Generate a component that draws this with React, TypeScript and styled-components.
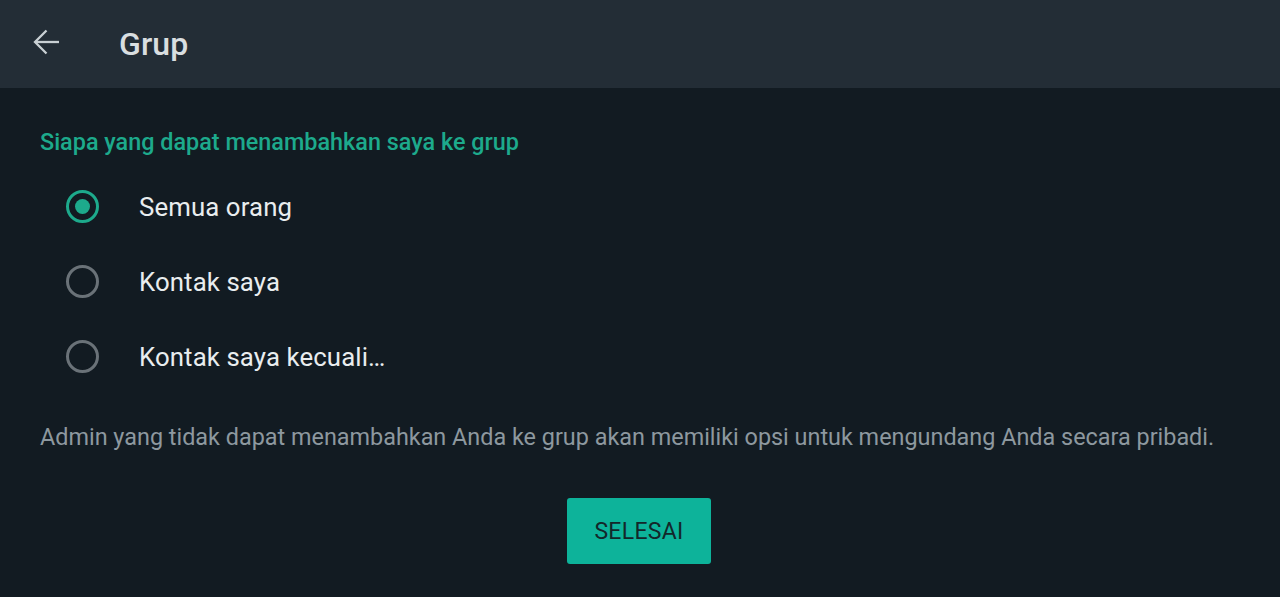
import React from "react";
import styled, { createGlobalStyle } from "styled-components";

const Global = createGlobalStyle`
  html, body { margin: 0; padding: 0; background: #121b22; }
  body { font-family: Roboto, "Noto Sans", sans-serif; overflow: hidden; }
`;

const Page = styled.div`
  width: 1280px;
  height: 597px;
  background: #121b22;
  display: flex;
  flex-direction: column;
`;

const Header = styled.header`
  height: 88px;
  background: #232d36;
  display: flex;
  align-items: center;
  flex-shrink: 0;
`;

const BackButton = styled.div`
  width: 119px;
  height: 88px;
  display: flex;
  align-items: center;
  padding-left: 33px;
  box-sizing: border-box;
  padding-bottom: 4px;
`;

const Title = styled.h1`
  margin: 0;
  font-size: 32px;
  font-weight: 500;
  color: #d9dee0;
  letter-spacing: 0.1px;
`;

const Content = styled.main`
  padding: 0 40px;
  display: flex;
  flex-direction: column;
`;

const SectionTitle = styled.h2`
  margin: 40px 0 0;
  font-size: 23.4px;
  line-height: 28px;
  font-weight: 500;
  color: #1daa8c;
`;

const Options = styled.div`
  margin-top: 34px;
  display: flex;
  flex-direction: column;
  gap: 42px;
`;

const Option = styled.label`
  display: flex;
  align-items: center;
  height: 33px;
  padding-left: 26px;
`;

const Radio = styled.span<{ $checked?: boolean }>`
  width: 33px;
  height: 33px;
  box-sizing: border-box;
  border-radius: 50%;
  border: 3px solid ${(p) => (p.$checked ? "#1daa8c" : "#6a7278")};
  display: flex;
  align-items: center;
  justify-content: center;
  flex-shrink: 0;
  &::after {
    content: "";
    display: ${(p) => (p.$checked ? "block" : "none")};
    width: 15px;
    height: 15px;
    border-radius: 50%;
    background: #1daa8c;
  }
`;

const OptionText = styled.span`
  margin-left: 40px;
  font-size: 25.8px;
  line-height: 33px;
  padding-top: 2px;
  color: #e9edef;
  letter-spacing: 0.1px;
`;

const Note = styled.p`
  margin: 50px 0 0;
  font-size: 23.4px;
  line-height: 28px;
  color: #8d989f;
  letter-spacing: 0;
  white-space: nowrap;
`;

const Actions = styled.div`
  display: flex;
  justify-content: center;
  margin-top: 47px;
  padding-right: 2px;
`;

const DoneButton = styled.button`
  width: 144px;
  height: 66px;
  border: none;
  border-radius: 3px;
  background: #0db39a;
  color: #13272a;
  font-family: Roboto, sans-serif;
  font-size: 23px;
  font-weight: 400;
  letter-spacing: 0.3px;
  cursor: pointer;
`;

const options = [
  { label: "Semua orang", checked: true },
  { label: "Kontak saya", checked: false },
  { label: "Kontak saya kecuali…", checked: false },
];

export default function App() {
  return (
    <Page>
      <Global />
      <Header>
        <BackButton>
          <svg width="26" height="26" viewBox="0 0 26 26" fill="none" stroke="#c9d0d4" strokeWidth="2.3" strokeLinecap="butt" strokeLinejoin="miter">
            <path d="M26 13H2" />
            <path d="M13.5 1.5L2 13l11.5 11.5" />
          </svg>
        </BackButton>
        <Title>Grup</Title>
      </Header>
      <Content>
        <SectionTitle>Siapa yang dapat menambahkan saya ke grup</SectionTitle>
        <Options>
          {options.map((o) => (
            <Option key={o.label}>
              <Radio $checked={o.checked} />
              <OptionText>{o.label}</OptionText>
            </Option>
          ))}
        </Options>
        <Note>
          Admin yang tidak dapat menambahkan Anda ke grup akan memiliki opsi untuk mengundang Anda secara pribadi.
        </Note>
        <Actions>
          <DoneButton>SELESAI</DoneButton>
        </Actions>
      </Content>
    </Page>
  );
}
